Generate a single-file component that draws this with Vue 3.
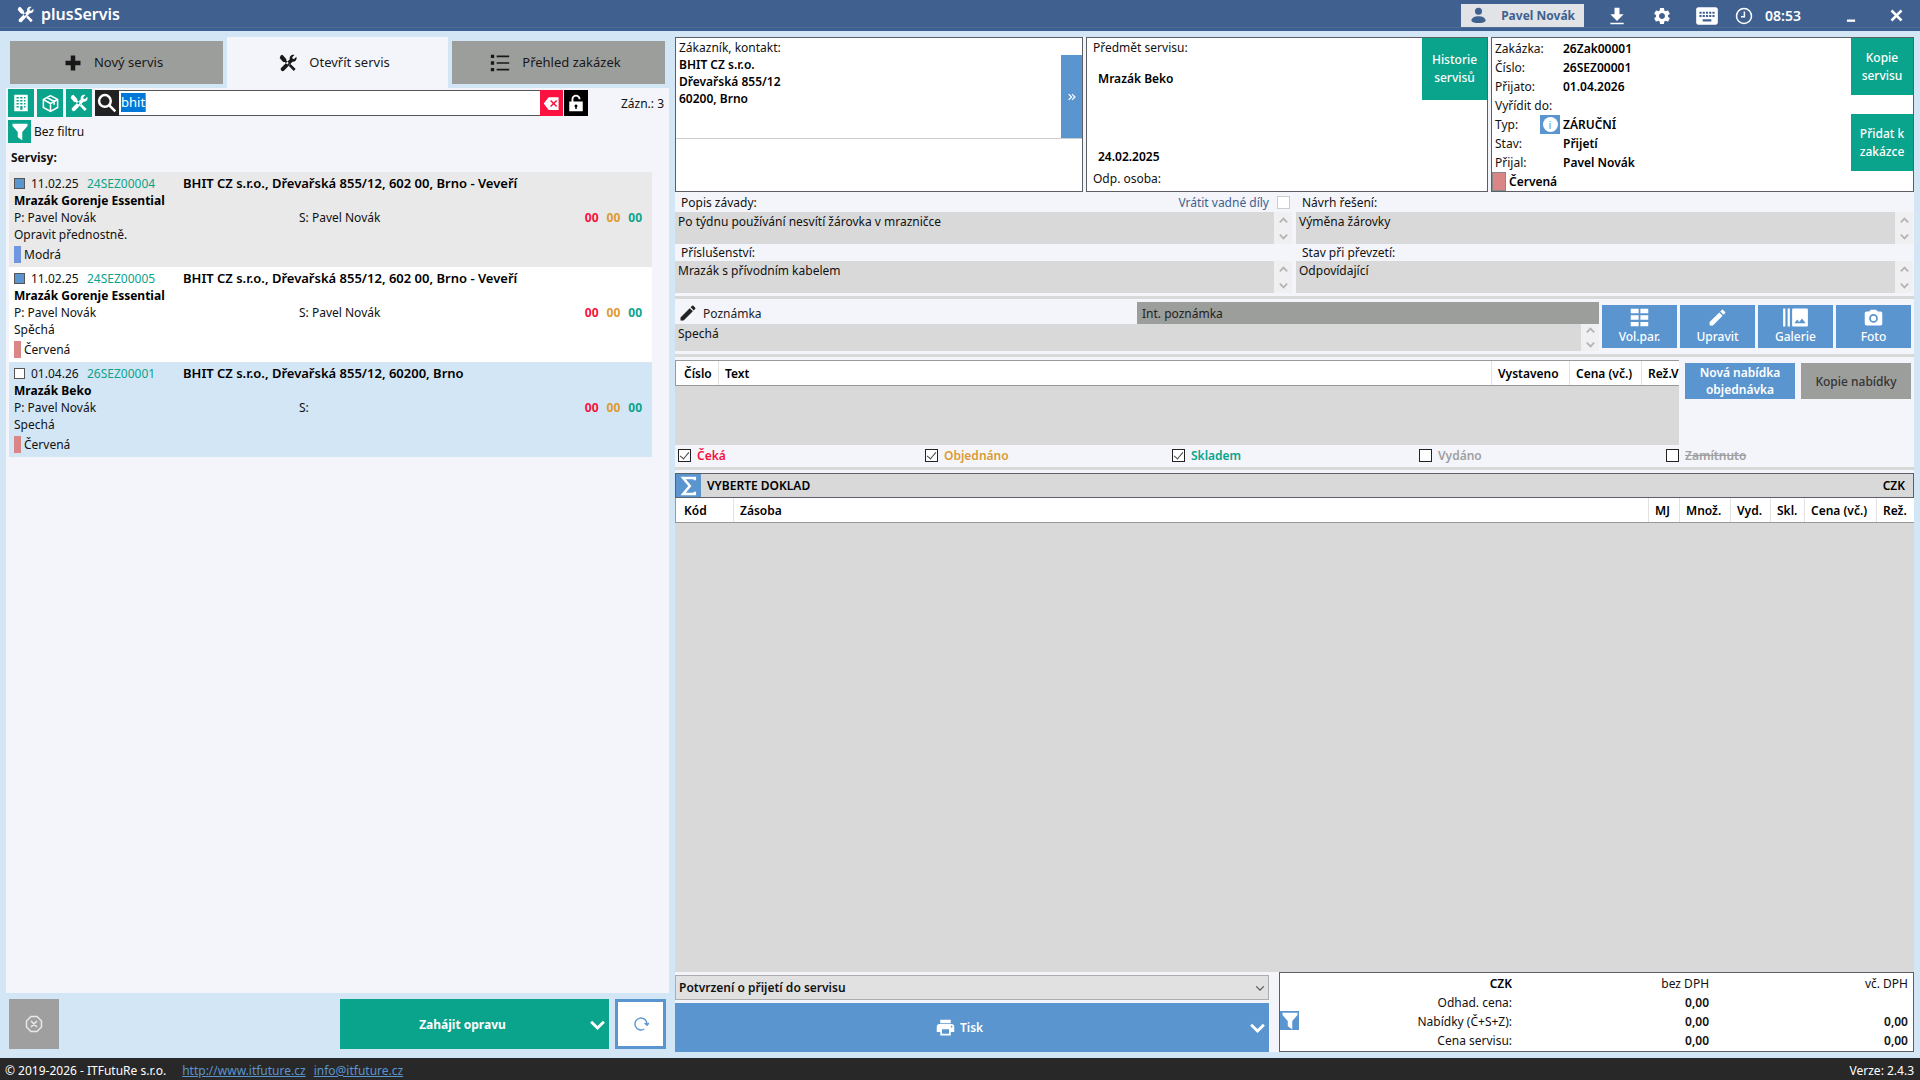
<script setup>
import { ref, h } from 'vue'

const paths = {
  plus: 'M9 2h6v7h7v6h-7v7H9v-7H2V9h7z',
  tools: 'M2.2 2 4.6 1l5 5.6.2 2.2 3.2 3.3-2 2-3.3-3.3-2.2-.3L.9 5.4zM15 13l7.2 7.1-2.6 2.7-7-7.4zM17.2 1.2c1.2-.4 2.400-.3 3.400.1l-3 3 .5 2 2 .5 3-3c1.300 3.300-1.200 6.900-5.100 6.400L6.900 22.100c-2.500 2.500-6.400-1.100-3.900-3.900L14.400 7c-.7-2.400.6-5 2.800-5.800z',
  list: 'M1 2h4v4H1zM8 3h15v2H8zM1 10h4v4H1zm7 1h15v2H8zM1 18h4v4H1zm7 1h15v2H8z',
  building: 'M3 1h18v22H3zM6 4v2h3V4zm5 0v2h3V4zm5 0v2h2V4zM6 8v2h3V8zm5 0v2h3V8zm5 0v2h2V8zM6 12v2h3v-2zm5 0v2h3v-2zm5 0v2h2v-2zM6 16v2h3v-2zm5 0v5h3v-5zm5 0v2h2v-2z',
  funnel: 'M2 1h20v3l-7 8v11l-6-4v-7L2 4z',
  download: 'M4 22h16v-2H4v2zM20 10h-5V2H9v8H4l8 8z',
  gear: 'M19.14 12.94c.04-.3.06-.61.06-.94s-.02-.64-.07-.94l2.030-1.580c.18-.14.23-.41.12-.61l-1.920-3.320c-.12-.22-.37-.29-.59-.22l-2.390.96c-.5-.38-1.030-.7-1.620-.94l-.36-2.540c-.04-.24-.24-.41-.48-.41h-3.840c-.24 0-.43.17-.47.41l-.36 2.540c-.59.24-1.130.57-1.620.94l-2.390-.96c-.22-.08-.47 0-.59.22L2.740 8.870c-.12.21-.08.47.12.61l2.030 1.580c-.05.3-.09.63-.09.94s.02.64.07.94l-2.030 1.580c-.18.14-.23.41-.12.61l1.920 3.320c.12.22.37.29.59.22l2.390-.96c.5.38 1.030.7 1.620.94l.36 2.540c.05.24.24.41.48.41h3.840c.24 0 .44-.17.47-.41l.36-2.540c.59-.24 1.130-.56 1.620-.94l2.390.96c.22.08.47 0 .59-.22l1.920-3.320c.12-.22.07-.47-.12-.61l-2.010-1.580zM12 15.600c-1.980 0-3.600-1.620-3.600-3.600s1.620-3.600 3.600-3.600 3.600 1.620 3.600 3.600-1.620 3.600-3.600 3.600z',
  keyboard: 'M20 4H4c-1.100 0-2 .9-2 2v12c0 1.100.9 2 2 2h16c1.100 0 2-.9 2-2V6c0-1.100-.9-2-2-2zm-9 4h2v2h-2V8zm0 3h2v2h-2v-2zM8 8h2v2H8V8zm0 3h2v2H8v-2zm-1 2H5v-2h2v2zm0-3H5V8h2v2zm9 7H8v-2h8v2zm0-4h-2v-2h2v2zm0-3h-2V8h2v2zm3 3h-2v-2h2v2zm0-3h-2V8h2v2z',
  user: 'M12 1a5 5 0 1 1 0 10 5 5 0 0 1 0-10zM2 19c0-8 20-8 20 0 0 5-20 5-20 0z',
  print: 'M19 8H5c-1.660 0-3 1.340-3 3v6h4v4h12v-4h4v-6c0-1.660-1.340-3-3-3zm-3 11H8v-5h8v5zm3-7c-.55 0-1-.45-1-1s.45-1 1-1 1 .45 1 1-.45 1-1 1zm-1-9H6v4h12V3z',
  pencil: 'M3 17.250V21h3.750L17.810 9.940l-3.750-3.750L3 17.250zM20.710 7.040c.39-.39.39-1.020 0-1.410l-2.340-2.340c-.39-.39-1.020-.39-1.410 0l-1.830 1.830 3.750 3.750 1.830-1.830z',
  gallery: 'M1 4h2v16H1zm4 0h2v16H5zm17 0H10c-.55 0-1 .45-1 1v14c0 .55.45 1 1 1h12c.55 0 1-.45 1-1V5c0-.55-.45-1-1-1zM11 17l2.500-3.150L15.290 16l2.500-3.220L21 17H11z',
  camera: 'M9 3 7 5H4c-1.100 0-2 .9-2 2v12c0 1.100.9 2 2 2h16c1.100 0 2-.9 2-2V7c0-1.100-.9-2-2-2h-3l-2-2zm3 5a5 5 0 1 1 0 10 5 5 0 0 1 0-10zm0 2a3 3 0 1 0 0 6 3 3 0 0 0 0-6z',
  grid: 'M2 2h9v5H2zm11 0h9v5h-9zM2 9.500h9v5H2zm11 0h9v5h-9zM2 17h9v5H2zm11 0h9v5h-9z',
  erase: 'M8 3h14v18H8l-7-9zm3.500 4L10 8.500l3.500 3.500-3.500 3.500 1.500 1.500 3.500-3.500 3.500 3.500 1.500-1.500-3.500-3.500L20 8.500 18.500 7 15 10.500z',
  lock: 'M6 10V7c0-8 12-8 12 0h-2.500c0-5-7-5-7 0v3H21v13H3V10zm6 4a2 2 0 0 0-1 3.700V20h2v-2.300a2 2 0 0 0-1-3.700z'
}
const lines = {
  cube: 'M12 2 21 7v10l-9 5-9-5V7zM3 7l9 5 9-5M12 12v10M7.500 4.500l9 5v4',
  search: 'M9.500 2.500a7 7 0 1 1 0 14 7 7 0 0 1 0-14zM14.500 14.500l7.500 7.500',
  clock: 'M12 2a10 10 0 1 1 0 20 10 10 0 0 1 0-20zM12.500 6v7H8',
  min: 'M5 20h14',
  close: 'M4 4l16 16M20 4 4 20',
  chevron: 'M3 8l9 9 9-9',
  up: 'M4 16l8-8 8 8',
  down: 'M4 8l8 8 8-8',
  cancel: 'M8 2h8l6 6v8l-6 6H8l-6-6V8zM8 8l8 8M16 8l-8 8',
  refresh: 'M17 19.500a9 9 0 1 1 4-7.500M17.500 10.500 21 14l3-3.500',
  sigma: 'M19 5V2.500H5l8 9.500-8 9.500h14V19',
  raquo: 'M4 5l7 7-7 7M12 5l7 7-7 7'
}
const Icon = (p) => {
  const d = paths[p.name]
  const s = p.size || 16
  return h('svg', { viewBox: '0 0 24 24', width: s, height: s, 'aria-hidden': 'true', style: { display: 'block', flex: 'none' } }, [
    d
      ? h('path', { d, fill: 'currentColor', 'fill-rule': 'evenodd' })
      : h('path', { d: lines[p.name], fill: 'none', stroke: 'currentColor', 'stroke-width': p.weight || 2 })
  ])
}
Icon.props = ['name', 'size', 'weight']

const query = ref('bhit')
const note = ref('Spechá')
const documentType = ref('Potvrzení o přijetí do servisu')

const services = [
  { date: '11.02.25', no: '24SEZ00004', customer: 'BHIT CZ s.r.o., Dřevařská 855/12, 602 00, Brno - Veveří', item: 'Mrazák Gorenje Essential', tech: 'Pavel Novák', note: 'Opravit přednostně.', tag: 'Modrá', tone: 'blue', done: true },
  { date: '11.02.25', no: '24SEZ00005', customer: 'BHIT CZ s.r.o., Dřevařská 855/12, 602 00, Brno - Veveří', item: 'Mrazák Gorenje Essential', tech: 'Pavel Novák', note: 'Spěchá', tag: 'Červená', tone: 'red', done: true },
  { date: '01.04.26', no: '26SEZ00001', customer: 'BHIT CZ s.r.o., Dřevařská 855/12, 60200, Brno', item: 'Mrazák Beko', tech: '', note: 'Spechá', tag: 'Červená', tone: 'red', done: false }
]
const fields = [
  { id: 'fault', label: 'Popis závady:', text: 'Po týdnu používání nesvítí žárovka v mrazničce', parts: true },
  { id: 'solution', label: 'Návrh řešení:', text: 'Výměna žárovky' },
  { id: 'accessories', label: 'Příslušenství:', text: 'Mrazák s přívodním kabelem' },
  { id: 'condition', label: 'Stav při převzetí:', text: 'Odpovídající' }
]
const order = [
  ['Zakázka:', '26Zak00001'],
  ['Číslo:', '26SEZ00001'],
  ['Přijato:', '01.04.2026'],
  ['Vyřídit do:', ''],
  ['Typ:', 'ZÁRUČNÍ'],
  ['Stav:', 'Přijetí'],
  ['Přijal:', 'Pavel Novák']
]
const actions = [
  ['grid', 'Vol.par.'],
  ['pencil', 'Upravit'],
  ['gallery', 'Galerie'],
  ['camera', 'Foto']
]
const states = [
  { label: 'Čeká', cls: 'red', on: true },
  { label: 'Objednáno', cls: 'amber', on: true },
  { label: 'Skladem', cls: 'green', on: true },
  { label: 'Vydáno', cls: 'dim', on: false },
  { label: 'Zamítnuto', cls: 'dim struck', on: false }
]
</script>

<template>
  <div class="app">
    <header class="topbar">
      <h1 class="brand"><Icon name="tools" :size="17" />plusServis</h1>
      <div class="tray">
        <button class="user"><Icon name="user" :size="17" /><span>Pavel Novák</span></button>
        <button aria-label="Stáhnout"><Icon name="download" :size="20" /></button>
        <button aria-label="Nastavení"><Icon name="gear" :size="20" /></button>
        <button aria-label="Klávesnice"><Icon name="keyboard" :size="26" /></button>
        <span class="clock"><Icon name="clock" :size="18" />08:53</span>
        <button aria-label="Minimalizovat"><Icon name="min" :size="14" :weight="4" /></button>
        <button aria-label="Zavřít"><Icon name="close" :size="15" :weight="4" /></button>
      </div>
    </header>

    <main class="work">
      <section class="left">
        <nav class="tabs">
          <button class="tab"><Icon name="plus" :size="18" />Nový servis</button>
          <button class="tab active"><Icon name="tools" :size="18" />Otevřít servis</button>
          <button class="tab"><Icon name="list" :size="20" />Přehled zakázek</button>
        </nav>
        <div class="panel">
          <div class="searchrow">
            <button class="sq" aria-label="Firmy"><Icon name="building" :size="18" /></button>
            <button class="sq" aria-label="Zboží"><Icon name="cube" :size="19" /></button>
            <button class="sq" aria-label="Servis"><Icon name="tools" :size="18" /></button>
            <div class="search">
              <label for="q" aria-label="Hledat"><Icon name="search" :size="20" :weight="3" /></label>
              <div class="box">
                <span class="sel">{{ query }}</span>
                <input id="q" v-model="query" type="text" />
              </div>
              <button class="clear" aria-label="Smazat"><Icon name="erase" :size="17" /></button>
              <button class="lock" aria-label="Zámek"><Icon name="lock" :size="18" /></button>
            </div>
            <span class="count">Zázn.: 3</span>
          </div>
          <div class="filterrow">
            <button class="funnel" aria-label="Filtr"><Icon name="funnel" :size="18" /></button>Bez filtru
          </div>
          <h2 class="listtitle">Servisy:</h2>
          <ul class="list">
            <li v-for="s in services" :key="s.no" class="service">
              <div class="head">
                <input type="checkbox" class="mark" :checked="s.done" :aria-label="s.no" />
                <span class="date">{{ s.date }}</span>
                <span class="no">{{ s.no }}</span>
                <b class="who">{{ s.customer }}</b>
              </div>
              <b class="line">{{ s.item }}</b>
              <div class="people">
                <span>P: Pavel Novák</span><span>S: {{ s.tech }}</span>
                <span class="nums"><b class="red">00</b><b class="amber">00</b><b class="green">00</b></span>
              </div>
              <div class="line">{{ s.note }}</div>
              <div class="tag"><i :class="s.tone"></i>{{ s.tag }}</div>
            </li>
          </ul>
        </div>
        <div class="bottom">
          <button class="cancel" aria-label="Zrušit"><Icon name="cancel" :size="18" /></button>
          <button class="start"><span>Zahájit opravu</span><Icon name="chevron" :size="17" :weight="4" /></button>
          <button class="refresh" aria-label="Obnovit"><Icon name="refresh" :size="16" /></button>
        </div>
      </section>

      <section class="right">
        <div class="cards">
          <article class="card customer">
            <div class="top">
              <span>Zákazník, kontakt:</span>
              <b>BHIT CZ s.r.o.</b><b>Dřevařská 855/12</b><b>60200, Brno</b>
              <button class="more" aria-label="Více"><Icon name="raquo" :size="10" :weight="3" /></button>
            </div>
          </article>
          <article class="card subject">
            <div class="info">
              <span>Předmět servisu:</span>
              <b class="item">Mrazák Beko</b>
              <b class="day">24.02.2025</b>
              <span>Odp. osoba:</span>
            </div>
            <button class="greenbtn history">Historie servisů</button>
          </article>
          <article class="card order">
            <dl>
              <div v-for="[k, v] in order" :key="k">
                <dt>{{ k }}<span v-if="k === 'Typ:'" class="badge"><i>i</i></span></dt>
                <dd>{{ v }}</dd>
              </div>
              <div class="color"><i></i><b>Červená</b></div>
            </dl>
            <div class="side">
              <button class="greenbtn">Kopie servisu</button>
              <button class="greenbtn">Přidat k zakázce</button>
            </div>
          </article>
        </div>

        <div class="fields">
          <div v-for="f in fields" :key="f.id" class="field">
            <div class="cap">
              <label :for="f.id">{{ f.label }}</label>
              <label v-if="f.parts" class="parts">Vrátit vadné díly<input type="checkbox" class="plain" /></label>
            </div>
            <div class="area">
              <textarea :id="f.id" :value="f.text" readonly></textarea>
              <div class="scroller"><Icon name="up" :size="11" :weight="4" /><Icon name="down" :size="11" :weight="4" /></div>
            </div>
          </div>
        </div>

        <div class="notes">
          <div class="notebox">
            <div class="notetabs">
              <label for="note" class="ntab"><Icon name="pencil" :size="20" />Poznámka</label>
              <button class="ntab off">Int. poznámka</button>
            </div>
            <div class="area">
              <textarea id="note" v-model="note"></textarea>
              <div class="scroller"><Icon name="up" :size="11" :weight="4" /><Icon name="down" :size="11" :weight="4" /></div>
            </div>
          </div>
          <button v-for="[icon, label] in actions" :key="label" class="action">
            <span class="glyph"><Icon :name="icon" :size="icon === 'gallery' ? 27 : 21" /></span>{{ label }}
          </button>
        </div>

        <div class="offers">
          <div class="offertable">
            <table>
              <colgroup><col class="w42" /><col /><col class="w78" /><col class="w72" /><col class="w38" /></colgroup>
              <thead><tr><th>Číslo</th><th>Text</th><th>Vystaveno</th><th>Cena (vč.)</th><th>Rež.V</th></tr></thead>
            </table>
          </div>
          <div class="offerbtns">
            <button class="bluebtn">Nová nabídka objednávka</button>
            <button class="greybtn">Kopie nabídky</button>
          </div>
        </div>
        <div class="states">
          <label v-for="s in states" :key="s.label" :class="s.cls"><input type="checkbox" class="tick" :checked="s.on" /><span>{{ s.label }}</span></label>
        </div>

        <div class="doc">
          <div class="docbar"><button aria-label="Součet"><Icon name="sigma" :size="20" :weight="3" /></button><b>VYBERTE DOKLAD</b><b class="cur">CZK</b></div>
          <table>
            <colgroup><col class="w57" /><col /><col class="w31" /><col class="w51" /><col class="w40" /><col class="w34" /><col class="w72" /><col class="w38" /></colgroup>
            <thead><tr><th>Kód</th><th>Zásoba</th><th>MJ</th><th>Množ.</th><th>Vyd.</th><th>Skl.</th><th>Cena (vč.)</th><th>Rež.</th></tr></thead>
          </table>
        </div>

        <div class="finish">
          <div class="printing">
            <div class="pick">
              <select v-model="documentType" aria-label="Doklad"><option>Potvrzení o přijetí do servisu</option></select>
              <Icon name="chevron" :size="10" :weight="3" />
            </div>
            <button class="print"><span><Icon name="print" :size="21" />Tisk</span><Icon name="chevron" :size="17" :weight="4" /></button>
          </div>
          <div class="sums">
            <button class="funnel2" aria-label="Filtr nabídek"><Icon name="funnel" :size="18" /></button>
            <table>
              <thead><tr><th><b>CZK</b></th><th>bez DPH</th><th>vč. DPH</th></tr></thead>
              <tbody>
                <tr><td>Odhad. cena:</td><td>0,00</td><td></td></tr>
                <tr><td>Nabídky (Č+S+Z):</td><td>0,00</td><td>0,00</td></tr>
                <tr><td>Cena servisu:</td><td>0,00</td><td>0,00</td></tr>
              </tbody>
            </table>
          </div>
        </div>
      </section>
    </main>

    <footer class="foot">
      <span class="copy">© 2019-2026 - ITFutuRe s.r.o.</span>
      <a href="http://www.itfuture.cz">http://www.itfuture.cz</a>
      <a href="mailto:info@itfuture.cz">info@itfuture.cz</a>
      <span class="ver">Verze: 2.4.3</span>
    </footer>
  </div>
</template>

<style>
body { margin: 0; background: #d3e6f6; }
</style>

<style scoped>
.app, .app * { box-sizing: border-box; }
.app {
  min-height: 100vh; display: flex; flex-direction: column;
  font: 12px/17px "Noto Sans", "Open Sans", sans-serif; color: #111; background: #d3e6f6;
}
button { font: inherit; border: 0; padding: 0; margin: 0; color: inherit; background: none; border-radius: 0; display: flex; align-items: center; justify-content: center; }
input, textarea, select { font: inherit; color: inherit; margin: 0; border-radius: 0; }
b, dd { font-weight: 600; color: #000; }
.red, b.red { color: #f8103c; }
.amber, b.amber { color: #dc9a32; }
.green, b.green { color: #0aa38b; }

.topbar { height: 31px; background: #40618f; color: #fff; display: flex; justify-content: space-between; box-shadow: inset 0 -3px #3d5f92, inset 0 -4px #4f6d90; padding: 0 16px 0 17px; }
.brand { margin: 0; height: 28px; font-size: 16px; line-height: 26px; font-weight: 600; display: flex; align-items: center; gap: 7px; }
.tray { display: flex; align-items: center; }
.user { width: 123px; height: 23px; background: #e1e3e6; color: #40618f; font-weight: 700; margin-right: 23px; gap: 14px; }
.tray > button:nth-child(2) { margin-right: 25px; }
.tray > button:nth-child(3) { margin-right: 22px; }
.tray > button:nth-child(4) { margin-right: 15px; }
.clock { display: flex; align-items: center; gap: 12px; font-size: 14px; font-weight: 600; margin-right: 43px; }
.tray > button:nth-child(6) { margin-right: 31px; }

.work { flex: 1; display: grid; grid-template-columns: 663fr 1239fr; gap: 6px; padding: 6px 6px 6px; }
.left { display: flex; flex-direction: column; min-width: 0; }
.tabs { display: grid; grid-template-columns: 213fr 221fr 213fr; gap: 4px; padding: 0 4px; height: 51px; }
.tab { background: #9c9e9c; margin: 4px 0; padding-right: 6px; gap: 12px; font-size: 13px; color: #181818; }
.tab.active { background: #f3f5fb; margin: 0; }
.panel { flex: 1; background: #f3f5fb; padding: 1px 3px 0 2px; }
.searchrow { display: flex; align-items: center; gap: 3px; height: 28px; }
.sq { width: 26px; height: 28px; background: #0aa38b; color: #fff; }
.search { flex: 1; display: flex; height: 26px; }
.search label { width: 24px; background: #222; color: #fff; display: flex; align-items: center; justify-content: center; }
.box { flex: 1; position: relative; background: #fff; border: solid #555; border-width: 1px 0; }
.box input { width: 100%; height: 100%; border: 0; outline: 0; padding: 0 2px; background: transparent; font-size: 13px; color: transparent; }
.sel { position: absolute; left: 2px; top: 2px; line-height: 19px; background: #0078d7; color: #fff; font-size: 13px; border-right: 1px solid #e08030; }
.clear { width: 23px; background: #fb1240; color: #fff; margin-right: 1px; }
.lock { width: 24px; background: #000; color: #fff; }
.count { width: 75px; padding-right: 2px; text-align: right; }
.filterrow { display: flex; align-items: center; gap: 3px; height: 23px; margin-top: 3px; }
.funnel { width: 23px; height: 23px; background: #0aa38b; color: #fff; }
.listtitle { font-size: 12px; line-height: 17px; font-weight: 700; margin: 6px 0 6px 3px; }
.list { list-style: none; margin: 0 14px 0 1px; padding: 0; }
.service { height: 95px; padding: 3px 10px 0 5px; background: #fff; }
.service b { font-weight: 700; }
.service b.who { font-size: 13px; font-weight: 600; }
.service:first-child { background: #e9e9e9; }
.service:last-child { background: #d3e6f6; }
.head { display: grid; grid-template-columns: 17px 56px 96px 1fr; align-items: center; height: 17px; white-space: nowrap; }
.mark { appearance: none; width: 11px; height: 11px; border: 1px solid #555; background: #fff; }
.mark:checked { background: #5a95d0; }
.no { color: #0aa38b; }
.line { display: block; height: 17px; }
.people { display: grid; grid-template-columns: 285px 1fr auto; height: 17px; }
.nums { display: flex; gap: 8px; }
.tag { display: flex; align-items: center; height: 20px; padding-top: 2px; gap: 3px; }
.tag i { width: 7px; height: 17px; flex: none; }
i.blue { background: #7096e0; }
i.red { background: #da8586; }
.bottom { display: flex; height: 59px; padding: 6px 3px 0; }
.bottom button { height: 50px; }
.cancel { width: 50px; background: #9f9f9f; color: #e8e8e8; }
.start { width: 269px; margin-left: auto; background: #0aa38b; color: #fff; font-weight: 700; padding-right: 3px; }
.start span { flex: 1; padding-right: 4px; }
.refresh { width: 51px; margin-left: 6px; background: #fff; border: 3px solid #5a95d0; color: #5a95d0; }

.right { display: flex; flex-direction: column; min-width: 0; background: #f3f5fb; }
.cards { display: grid; grid-template-columns: 408fr 402fr 423fr; gap: 3px; height: 153px; }
.card { background: #fff; border: 1px solid #5c5f66; }
.customer .top { position: relative; height: 101px; padding: 1px 3px; border-bottom: 1px solid #ccc; display: flex; flex-direction: column; }
.more { position: absolute; right: 0; top: 17px; width: 21px; height: 83px; background: #5a95d0; color: #fff; }
.subject, .order { display: flex; justify-content: space-between; }
.info { display: flex; flex-direction: column; padding: 1px 6px; height: 150px; }
.item { margin: 14px 5px 0; }
.day { margin: auto 5px 5px; }
.greenbtn { background: #0aa38b; color: #fff; width: 62px; line-height: 18px; font-weight: 500; }
.greenbtn.history { height: 62px; width: 65px; padding: 0 4px; }
.order dl { margin: 0; padding-top: 1px; }
.order dl div { display: flex; height: 19px; line-height: 19px; }
.order dt { width: 71px; padding-left: 3px; display: flex; justify-content: space-between; white-space: nowrap; }
.order dd { margin: 0; }
.badge { width: 20px; height: 19px; background: #5a95d0; margin-right: 3px; display: flex; align-items: center; justify-content: center; }
.badge i { width: 15px; height: 15px; border-radius: 8px; background: #fff; color: #5a95d0; font-style: normal; line-height: 15px; font-size: 11px; text-align: center; }
.color i { width: 14px; background: #da8586; border: 1px solid #888; margin-right: 3px; }
.side { display: flex; flex-direction: column; gap: 19px; }
.side .greenbtn { height: 57px; }

.fields { display: grid; grid-template-columns: 1fr 1fr; column-gap: 4px; height: 109px; padding-right: 1px; border-bottom: 3px solid #d9d9d9; align-content: start; }
.field { min-width: 0; }
.cap { display: flex; justify-content: space-between; align-items: center; height: 17px; padding: 0 0 0 6px; }
.field:nth-child(-n+2) .cap { height: 22px; padding-top: 2px; }
.parts { color: #40618f; display: flex; align-items: center; gap: 8px; margin-right: 2px; }
.plain { appearance: none; width: 13px; height: 13px; border: 1px solid #ccc; background: #fff; }
.area { display: flex; height: 32px; }
.area textarea { flex: 1; min-width: 0; height: 100%; resize: none; border: 0; outline: 0; padding: 1px 3px; background: #d9d9d9; overflow: hidden; }
.scroller { width: 18px; display: flex; flex-direction: column; align-items: center; justify-content: space-around; background: #f0f0f2; color: #b4b4b4; }
.notes { display: flex; align-items: flex-start; gap: 3px; height: 58px; padding: 3px 3px 0 0; border-bottom: 3px solid #d9d9d9; }
.notebox { flex: 1; height: 49px; }
.notetabs { display: grid; grid-template-columns: 1fr 1fr; height: 22px; }
.ntab { display: flex; align-items: center; justify-content: flex-start; gap: 5px; padding-left: 3px; color: #222; }
.ntab.off { background: #9c9e9c; padding-left: 5px; }
.notebox .area { height: 27px; }
.action { flex-direction: column; width: 75px; height: 43px; margin-top: 3px; background: #5a95d0; color: #fff; font-weight: 500; justify-content: space-evenly; line-height: 16px; }
.glyph { height: 18px; display: flex; align-items: center; }

.offers { display: flex; margin-top: 3px; height: 85px; padding-right: 3px; }
.offertable { flex: 1; background: #d9d9d9; min-width: 0; }
.offerbtns { display: flex; gap: 6px; padding: 3px 0 0 6px; }
.offerbtns button { width: 110px; height: 36px; padding: 0 8px; font-weight: 500; }
.offerbtns .bluebtn { background: #5a95d0; color: #fff; font-weight: 600; }
.offerbtns .greybtn { background: #9c9e9c; color: #333; white-space: nowrap; }
.offertable table, .doc table { width: 100%; table-layout: fixed; border-collapse: separate; border-spacing: 0; background: #fff; border: solid #999; border-width: 1px 0 1px 1px; height: 26px; }
.offertable th, .doc th { font-weight: 600; color: #000; text-align: left; padding: 0 0 0 6px; border-left: 1px solid #e2e2e2; overflow: hidden; white-space: nowrap; }
.offertable th:first-child, .doc th:first-child { border-left: 0; padding-left: 8px; }
.w31 { width: 31px; } .w34 { width: 34px; } .w38 { width: 38px; } .w40 { width: 40px; } .w42 { width: 42px; }
.w51 { width: 51px; } .w57 { width: 57px; } .w72 { width: 72px; } .w78 { width: 78px; }
.states { display: grid; grid-template-columns: repeat(5, 1fr); height: 25px; padding: 0 1px 2px 3px; border-bottom: 3px solid #d9d9d9; }
.states label { display: flex; align-items: center; gap: 6px; font-weight: 600; }
.dim { color: #a0a0a0; }
.struck span { text-decoration: line-through; }
.tick { appearance: none; width: 13px; height: 13px; border: 1px solid #222; background: #fff; display: grid; place-items: center; }
.tick:checked::after { content: ""; width: 4px; height: 8px; border: solid #444; border-width: 0 1px 1px 0; transform: rotate(40deg); margin-bottom: 2px; }

.doc { flex: 1; margin-top: 3px; background: #d9d9d9; }
.docbar { display: flex; align-items: center; height: 25px; border: 1px solid #5c5f66; padding-right: 8px; }
.docbar button { width: 25px; height: 23px; background: #5a95d0; color: #fff; margin-right: 6px; }
.cur { margin-left: auto; }
.doc table { border-top: 0; height: 25px; }

.finish { display: flex; gap: 10px; height: 80px; }
.printing { flex: 595; padding-top: 3px; }
.pick { position: relative; }
.pick select { appearance: none; display: block; width: 100%; height: 25px; border: 1px solid #adadad; background: #e1e1e1; padding: 0 3px; font-weight: 600; }
.pick svg { position: absolute; right: 4px; top: 8px; color: #555; }
.print { width: 100%; height: 49px; margin-top: 3px; background: #5a95d0; color: #fff; font-weight: 600; padding-right: 3px; }
.print > span { flex: 1; display: flex; align-items: center; justify-content: center; gap: 4px; padding-right: 6px; }
.sums { flex: 634; position: relative; background: #fff; border: 1px solid #5c5f66; }
.funnel2 { position: absolute; left: 0; top: 38px; width: 19px; height: 19px; background: #5a95d0; color: #fff; }
.sums table { width: 100%; border-collapse: collapse; table-layout: fixed; margin-top: 1px; }
.sums th, .sums td { height: 19px; padding: 0 5px 0 0; text-align: right; font-weight: 400; }
.sums th:first-child { width: 237px; }
.sums th:nth-child(2) { width: 197px; }
.sums td + td { font-weight: 600; }

.foot { height: 22px; background: #282828; color: #fff; display: flex; align-items: center; gap: 8px; padding: 2px 6px 0 5px; }
.copy { margin-right: 8px; }
.foot a { color: #5a95d0; }
.ver { margin-left: auto; }
</style>
